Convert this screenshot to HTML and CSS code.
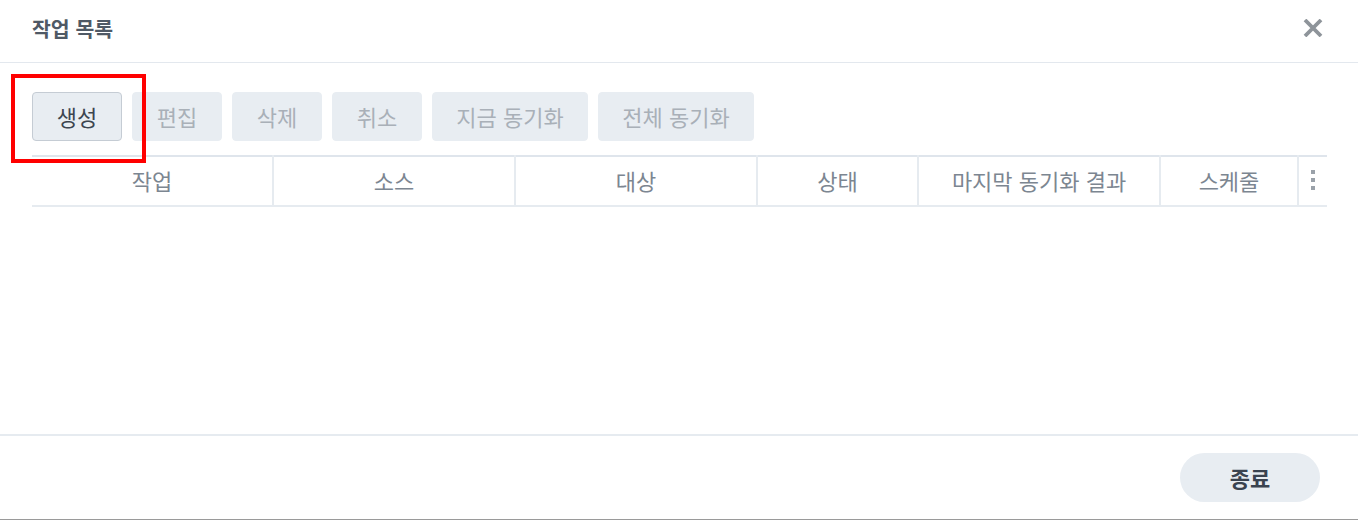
FILE: index.html
```html
<!DOCTYPE html>
<html lang="ko">

<head>
    <meta charset="UTF-8">
    <meta name="viewport" content="width=device-width, initial-scale=1.0">
    <title>작업 목록</title>
    <link rel="stylesheet" href="styles.css">
</head>

<body>
    <div class="dialog">
        <div class="dialog-head">
            <h2>작업 목록</h2>
            <span class="close">
                <svg width="20" height="18" viewBox="0 0 20 18">
                    <path d="M2 1 L18 17 M18 1 L2 17" stroke="#8e949a" stroke-width="3.8" fill="none" />
                </svg>
            </span>
        </div>

        <div class="dialog-body">
            <div class="toolbar">
                <span class="mark"></span>
                <button class="btn btn-on">생성</button>
                <button class="btn">편집</button>
                <button class="btn">삭제</button>
                <button class="btn">취소</button>
                <button class="btn btn-wide">지금 동기화</button>
                <button class="btn btn-wide">전체 동기화</button>
            </div>

            <table class="grid">
                <colgroup>
                    <col style="width:241px">
                    <col style="width:242px">
                    <col style="width:242px">
                    <col style="width:161px">
                    <col style="width:242px">
                    <col style="width:138px">
                    <col style="width:29px">
                </colgroup>
                <thead>
                    <tr>
                        <th>작업</th>
                        <th>소스</th>
                        <th>대상</th>
                        <th>상태</th>
                        <th>마지막 동기화 결과</th>
                        <th>스케줄</th>
                        <th class="more"><i></i><i></i><i></i></th>
                    </tr>
                </thead>
            </table>
        </div>

        <div class="dialog-foot">
            <button class="btn-close">종료</button>
        </div>
    </div>
</body>

</html>
```

FILE: styles.css
```css
body,
h2 {
    padding: 0;
    margin: 0;
}

body {
    font-family: "Noto Sans CJK KR", "Noto Sans", sans-serif;
    background: #fff;
}

.dialog {
    width: 1358px;
    height: 520px;
    box-sizing: border-box;
    border-bottom: 1px solid #9a9a9a;
    display: flex;
    flex-direction: column;
}

.dialog-head {
    height: 62px;
    border-bottom: 1px solid #e3e8ee;
    display: flex;
    align-items: center;
    justify-content: space-between;
    padding: 0 35px 0 32px;
}

.dialog-head h2 {
    font-size: 20.5px;
    font-weight: bold;
    color: #4f5965;
    margin-top: -6px;
}

.close {
    display: flex;
    margin-top: -6px;
}

.dialog-body {
    flex: 1;
    padding: 29px 31px 0 32px;
}

.toolbar {
    position: relative;
    display: flex;
    gap: 10px;
}

/* 빨간 강조 박스 */
.mark {
    position: absolute;
    left: -21px;
    top: -18px;
    width: 127px;
    height: 81px;
    border: 4px solid #f00;
}

.btn {
    width: 90px;
    height: 49px;
    padding: 0 0 2px;
    border: 1px solid #e8edf2;
    border-radius: 4px;
    background: #e8edf2;
    color: #a9b0b8;
    font-family: inherit;
    font-size: 22px;
    line-height: 1;
}

.btn-wide {
    width: 156px;
}

.btn-on {
    border-color: #c5ccd4;
    color: #3c4550;
}

.grid {
    margin-top: 14px;
    width: 1295px;
    border-collapse: collapse;
    table-layout: fixed;
}

.grid th {
    height: 45px;
    padding: 0 0 3px;
    border-top: 2px solid #dfe5ec;
    border-bottom: 2px solid #e6ebf0;
    border-right: 2px solid #e6ebf0;
    font-size: 22px;
    font-weight: normal;
    color: #7c8691;
}

.grid th.more {
    border-right: none;
}

.more i {
    display: block;
    width: 4px;
    height: 4px;
    margin: 4px auto;
    background: #9aa1a9;
}

.dialog-foot {
    height: 83px;
    border-top: 2px solid #e6ebf0;
    display: flex;
    align-items: center;
    justify-content: flex-end;
    padding-right: 38px;
}

.btn-close {
    width: 140px;
    height: 49px;
    border: none;
    border-radius: 25px;
    background: #e8edf2;
    color: #3a4350;
    font-family: inherit;
    font-size: 22px;
    font-weight: bold;
    margin-top: -1px;
}
```
